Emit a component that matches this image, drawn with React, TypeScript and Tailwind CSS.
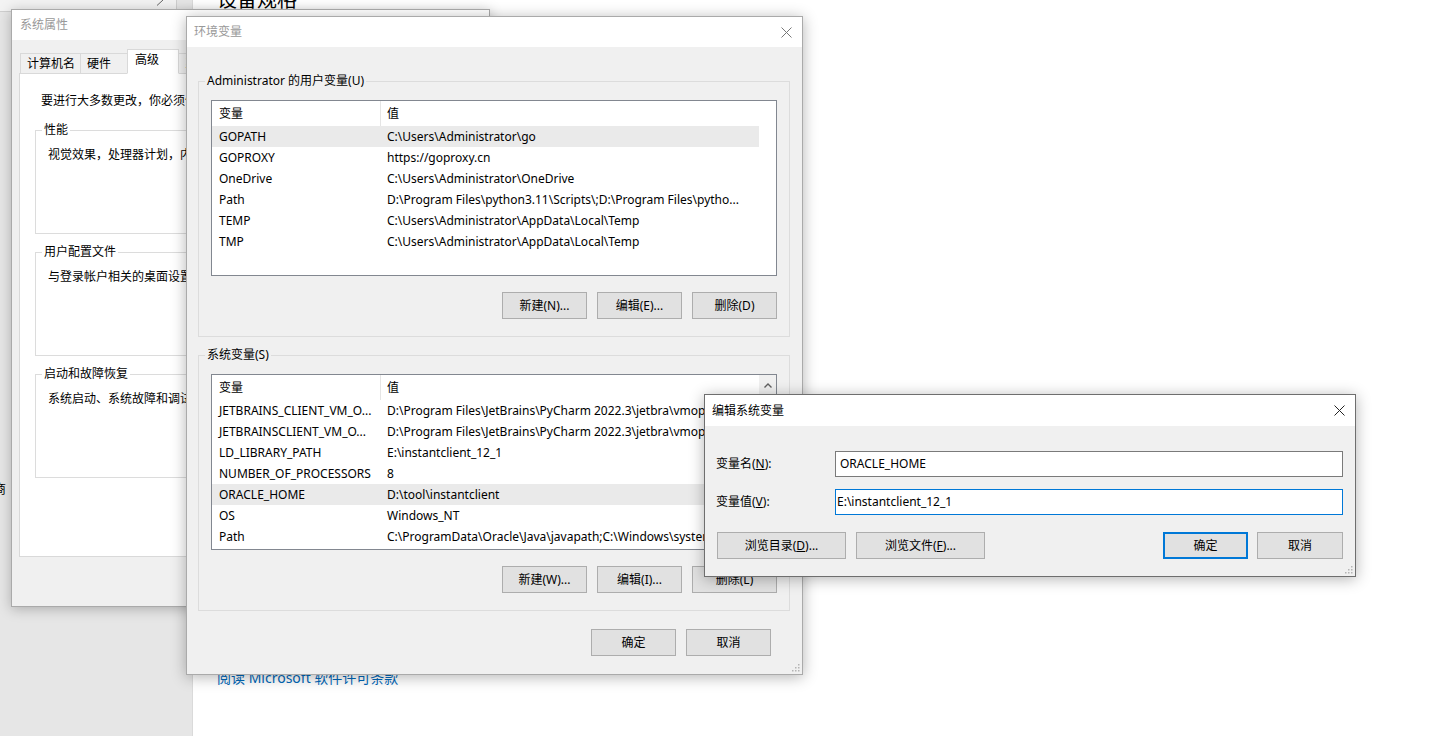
import type { ReactNode } from "react";
import clsx from "clsx";

type Row = [string, string];

const USER_VARS: Row[] = [
  ["GOPATH", "C:\\Users\\Administrator\\go"],
  ["GOPROXY", "https://goproxy.cn"],
  ["OneDrive", "C:\\Users\\Administrator\\OneDrive"],
  ["Path", "D:\\Program Files\\python3.11\\Scripts\\;D:\\Program Files\\pytho..."],
  ["TEMP", "C:\\Users\\Administrator\\AppData\\Local\\Temp"],
  ["TMP", "C:\\Users\\Administrator\\AppData\\Local\\Temp"],
];

const SYS_VARS: Row[] = [
  ["JETBRAINS_CLIENT_VM_O...", "D:\\Program Files\\JetBrains\\PyCharm 2022.3\\jetbra\\vmoptions\\jetbrains_client.vmoptions"],
  ["JETBRAINSCLIENT_VM_O...", "D:\\Program Files\\JetBrains\\PyCharm 2022.3\\jetbra\\vmoptions\\jetbrainsclient.vmoptions"],
  ["LD_LIBRARY_PATH", "E:\\instantclient_12_1"],
  ["NUMBER_OF_PROCESSORS", "8"],
  ["ORACLE_HOME", "D:\\tool\\instantclient"],
  ["OS", "Windows_NT"],
  ["Path", "C:\\ProgramData\\Oracle\\Java\\javapath;C:\\Windows\\system32;C:\\Windows;..."],
];

const TABS: { label: string; w: string }[] = [
  { label: "计算机名", w: "w-[61px]" },
  { label: "硬件", w: "w-[48px]" },
  { label: "高级", w: "w-[52px]" },
  { label: "系统保护", w: "w-[62px]" },
  { label: "远程", w: "w-[46px]" },
];

function CloseIcon() {
  return (
    <svg viewBox="0 0 11 11" className="h-[11px] w-[11px]" fill="none" stroke="currentColor" strokeWidth={1}>
      <path d="M0.5 0.5 L10.5 10.5 M10.5 0.5 L0.5 10.5" />
    </svg>
  );
}

// the dotted corner in the bottom right of resizable dialogs
function Grip() {
  const dots = [
    [7, 1],
    [7, 4],
    [4, 4],
    [7, 7],
    [4, 7],
    [1, 7],
  ];
  return (
    <svg viewBox="0 0 9 9" className="h-[9px] w-[9px]">
      {dots.map(([x, y]) => (
        <rect key={`${x}-${y}`} x={x} y={y} width="1.5" height="1.5" fill="#b4b4b4" />
      ))}
    </svg>
  );
}

function Btn({ children, w = "w-[85px]", primary }: { children: ReactNode; w?: string; primary?: boolean }) {
  return (
    <div
      className={clsx(
        "flex h-[27px] shrink-0 items-center justify-center bg-[#e1e1e1] leading-none",
        w,
        primary ? "border-2 border-[#0078d7]" : "border border-[#adadad]",
      )}
    >
      {children}
    </div>
  );
}

function VarList({ rows, selected, scroll }: { rows: Row[]; selected: number; scroll?: boolean }) {
  return (
    <div className="flex h-[176px] border border-[#828790] bg-white">
      <div className="flex min-w-0 flex-1 flex-col">
        <div className="flex h-[25px] shrink-0 leading-[25px]">
          <div className="w-[169px] shrink-0 border-r border-[#e5e5e5] pl-[7px]">变量</div>
          <div className="min-w-0 flex-1 pl-[6px]">值</div>
        </div>
        {rows.map(([name, value], i) => (
          <div
            key={name + i}
            className={clsx("flex h-[21px] shrink-0 leading-[21px]", i === selected && "bg-[#eaeaea]")}
          >
            <div className="w-[169px] shrink-0 overflow-hidden whitespace-nowrap pl-[7px]">{name}</div>
            <div className="min-w-0 flex-1 overflow-hidden whitespace-nowrap pl-[6px]">{value}</div>
          </div>
        ))}
      </div>
      <div className={clsx("w-[17px] shrink-0", scroll && "bg-[#f0f0f0]")}>
        {scroll && (
          <div className="flex h-[20px] items-center justify-center text-[#606060]">
            <svg viewBox="0 0 8 5" className="h-[5px] w-[8px]" fill="none" stroke="currentColor" strokeWidth={1.4}>
              <path d="M0.5 4.5 L4 1 L7.5 4.5" />
            </svg>
          </div>
        )}
      </div>
    </div>
  );
}

function VarGroup({ title, rows, selected, scroll, buttons }: { title: string; rows: Row[]; selected: number; scroll?: boolean; buttons: string[] }) {
  return (
    <fieldset className="min-w-0 border border-[#dcdcdc] px-[12px] pt-[11px] pb-[17px]">
      <legend className="-ml-[6px] px-[2px] leading-[16px]">{title}</legend>
      <VarList rows={rows} selected={selected} scroll={scroll} />
      <div className="mt-[16px] flex justify-end gap-[10px]">
        {buttons.map((b) => (
          <Btn key={b}>{b}</Btn>
        ))}
      </div>
    </fieldset>
  );
}

function PropGroup({ title, text }: { title: string; text: string }) {
  return (
    <fieldset className="h-[112px] min-w-0 border border-[#dcdcdc] pt-[9px] pl-[12px]">
      <legend className="-ml-[6px] px-[2px] leading-[16px]">{title}</legend>
      <p className="whitespace-nowrap leading-[16px]">{text}</p>
    </fieldset>
  );
}

function SystemProperties() {
  return (
    <div className="absolute top-[9px] left-[11px] z-10 flex h-[598px] w-[479px] flex-col border border-[#aaaaaa] bg-[#f0f0f0] shadow-[0_2px_12px_rgba(0,0,0,0.25)]">
      <div className="h-[30px] shrink-0 bg-white pl-[8px] leading-[30px] text-[#999999]">系统属性</div>
      <div className="mt-[9px] flex h-[24px] items-end pl-[8px]">
        {TABS.map((t, i) => {
          const active = t.label === "高级";
          return (
            <div
              key={t.label}
              className={clsx(
                "relative -mb-px flex items-center border border-[#d9d9d9] leading-none",
                t.w,
                active ? "z-10 h-[25px] border-b-white bg-white pb-[4px] pl-[7px]" : "h-[21px] bg-[#f0f0f0] pl-[6px]",
                i > 0 && "-ml-px",
              )}
            >
              {t.label}
            </div>
          );
        })}
      </div>
      <div className="mx-[7px] flex h-[484px] flex-col gap-[10px] border border-[#d9d9d9] bg-white px-[15px]">
        <p className="mt-[19px] mb-[3px] pl-[6px] leading-[16px]">要进行大多数更改，你必须作为管理员登录。</p>
        <PropGroup title="性能" text="视觉效果，处理器计划，内存使用，以及虚拟内存" />
        <PropGroup title="用户配置文件" text="与登录帐户相关的桌面设置" />
        <PropGroup title="启动和故障恢复" text="系统启动、系统故障和调试信息" />
      </div>
    </div>
  );
}

function EnvVarsDialog() {
  return (
    <div className="absolute top-[16px] left-[186px] z-20 flex h-[659px] w-[617px] flex-col border border-[#aaaaaa] bg-[#f0f0f0] shadow-[0_2px_14px_rgba(0,0,0,0.3)]">
      <div className="flex h-[30px] shrink-0 items-center justify-between bg-white pr-[10px] pl-[7px] text-[#999999]">
        <span>环境变量</span>
        <span className="text-[#777777]">
          <CloseIcon />
        </span>
      </div>
      <div className="flex flex-col px-[11px] pr-[12px]">
        <div className="mt-[26px]">
          <VarGroup
            title="Administrator 的用户变量(U)"
            rows={USER_VARS}
            selected={0}
            buttons={["新建(N)...", "编辑(E)...", "删除(D)"]}
          />
        </div>
        <div className="mt-[10px]">
          <VarGroup title="系统变量(S)" rows={SYS_VARS} selected={4} scroll buttons={["新建(W)...", "编辑(I)...", "删除(L)"]} />
        </div>
        <div className="mt-[18px] flex justify-end gap-[10px] pr-[19px]">
          <Btn>确定</Btn>
          <Btn>取消</Btn>
        </div>
      </div>
      <div className="mt-auto flex justify-end pr-[2px] pb-[2px]">
        <Grip />
      </div>
    </div>
  );
}

function EditVarDialog() {
  return (
    <div className="absolute top-[394px] left-[704px] z-30 flex h-[183px] w-[652px] flex-col border border-[#6e6e6e] bg-[#f0f0f0] shadow-[0_2px_14px_rgba(0,0,0,0.3)]">
      <div className="flex h-[31px] shrink-0 items-center justify-between bg-white pr-[10px] pl-[7px]">
        <span>编辑系统变量</span>
        <span className="text-[#222222]">
          <CloseIcon />
        </span>
      </div>
      <div className="flex flex-col pt-[25px] pr-[12px] pl-[11px]">
        <div className="flex items-center">
          <div className="w-[119px] shrink-0">
            变量名(<span className="underline">N</span>):
          </div>
          <div className="flex h-[26px] flex-1 items-center border border-[#7a7a7a] bg-white pl-[4px]">ORACLE_HOME</div>
        </div>
        <div className="mt-[12px] flex items-center">
          <div className="w-[119px] shrink-0">
            变量值(<span className="underline">V</span>):
          </div>
          <div className="flex h-[26px] flex-1 items-center border border-[#0078d7] bg-white pl-[1px]">E:\instantclient_12_1</div>
        </div>
        <div className="mt-[17px] flex items-center pl-[1px]">
          <Btn w="w-[129px]">
            <span>
              浏览目录(<span className="underline">D</span>)...
            </span>
          </Btn>
          <div className="ml-[10px]">
            <Btn w="w-[129px]">
              <span>
                浏览文件(<span className="underline">F</span>)...
              </span>
            </Btn>
          </div>
          <div className="ml-auto flex gap-[9px]">
            <Btn primary>确定</Btn>
            <Btn w="w-[86px]">取消</Btn>
          </div>
        </div>
      </div>
      <div className="mt-auto flex justify-end pr-[2px] pb-[2px]">
        <Grip />
      </div>
    </div>
  );
}

export default function App() {
  return (
    <div className="relative h-[736px] w-[1431px] overflow-hidden bg-white font-['Noto_Sans','Noto_Sans_CJK_SC',sans-serif] text-[12px] text-black">
      <div className="flex h-full">
        <aside className="flex w-[193px] shrink-0 flex-col border-r border-[#dadada] bg-[#e6e6e6]">
          <div className="flex h-[12px] w-[177px] justify-end border-r border-b border-[#cfcfcf] bg-[#f3f3f3] pr-[12px]">
            <svg viewBox="0 0 8 6" className="h-[6px] w-[8px]" fill="none" stroke="#666" strokeWidth={1}>
              <path d="M1 5.5 L7 0" />
            </svg>
          </div>
          <span className="mt-[468px] -ml-[7px] text-[13px] leading-[16px]">商</span>
        </aside>
        <main className="flex flex-1 flex-col pl-[24px]">
          <h1 className="-mt-[13px] text-[20px] leading-[26px] font-normal">设备规格</h1>
          <a className="mt-[655px] text-[14px] leading-[20px] text-[#0067b8]">阅读 Microsoft 软件许可条款</a>
        </main>
      </div>
      <SystemProperties />
      <EnvVarsDialog />
      <EditVarDialog />
    </div>
  );
}
